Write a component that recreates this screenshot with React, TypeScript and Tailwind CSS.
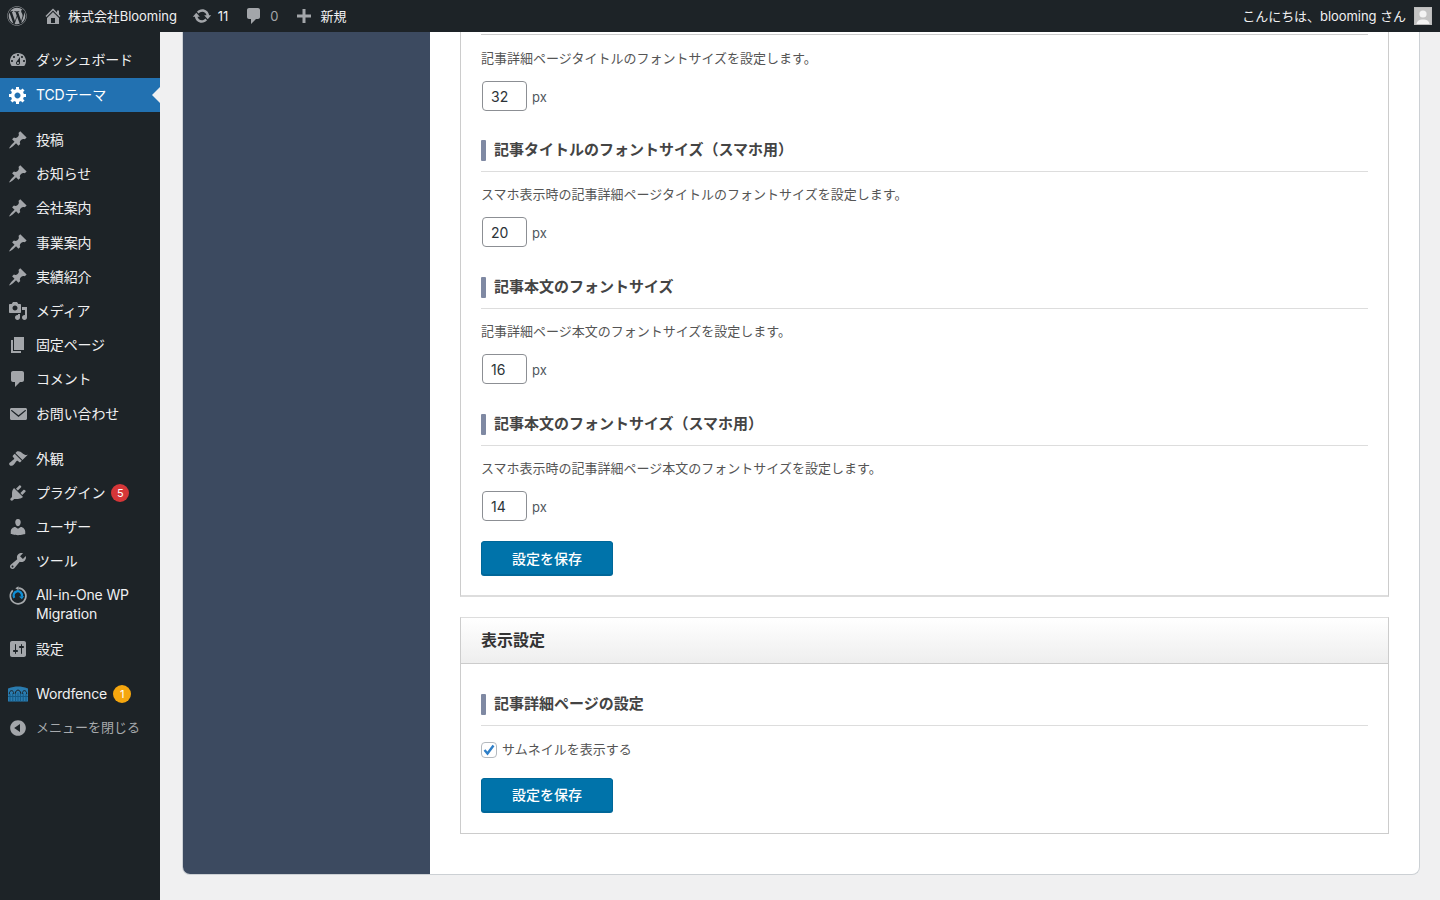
import type { ReactNode } from 'react';
import { FaWordpress } from 'react-icons/fa';

const PIN = 'M10.44 3.02l1.82-1.82 6.36 6.35-1.83 1.82c-1.05-.68-2.48-.57-3.41.36l-.75.75c-.92.93-1.04 2.35-.35 3.41l-1.83 1.82-2.41-2.41-2.8 2.79c-.42.42-3.38 2.71-3.8 2.29s1.86-3.39 2.28-3.81l2.79-2.79L4.1 9.36l1.83-1.82c1.05.69 2.48.57 3.4-.36l.75-.75c.93-.92 1.05-2.35.36-3.41z';
const DASH = 'M3.76 16h12.48c1.1-1.37 1.76-3.11 1.76-5 0-4.42-3.58-8-8-8s-8 3.58-8 8c0 1.89.66 3.63 1.76 5zM10 4c.55 0 1 .45 1 1s-.45 1-1 1-1-.45-1-1 .45-1 1-1zM6 6c.55 0 1 .45 1 1s-.45 1-1 1-1-.45-1-1 .45-1 1-1zm8 0c.55 0 1 .45 1 1s-.45 1-1 1-1-.45-1-1 .45-1 1-1zm-5.37 5.55L12 7v6c0 1.1-.9 2-2 2s-2-.9-2-2c0-.57.24-1.08.63-1.45zM4 10c.55 0 1 .45 1 1s-.45 1-1 1-1-.45-1-1 .45-1 1-1zm12 0c.55 0 1 .45 1 1s-.45 1-1 1-1-.45-1-1 .45-1 1-1zm-5 3c0-.55-.45-1-1-1s-1 .45-1 1 .45 1 1 1 1-.45 1-1z';
const GEAR = 'M18 12h-2.18c-.17.7-.44 1.35-.81 1.93l1.54 1.54-2.1 2.1-1.54-1.54c-.58.36-1.23.63-1.91.79V19H8v-2.18c-.68-.16-1.33-.43-1.91-.79l-1.54 1.54-2.12-2.12 1.54-1.54c-.36-.58-.63-1.23-.79-1.91H1V9.03h2.17c.16-.7.44-1.35.8-1.94L2.43 5.55l2.1-2.1 1.54 1.54c.58-.37 1.24-.64 1.93-.81V2h3v2.18c.68.16 1.33.43 1.91.79l1.54-1.54 2.12 2.12-1.54 1.54c.36.59.64 1.24.8 1.94H18V12zm-8.5 1.5c1.66 0 3-1.34 3-3s-1.34-3-3-3-3 1.34-3 3 1.34 3 3 3z';
const MEDIA = 'M13 11V4c0-.55-.45-1-1-1h-1.67L9 1H5L3.67 3H2c-.55 0-1 .45-1 1v7c0 .55.45 1 1 1h10c.55 0 1-.45 1-1zM7 4.5c1.38 0 2.5 1.12 2.5 2.5S8.38 9.5 7 9.5 4.5 8.38 4.5 7 5.62 4.5 7 4.5zM14 6h5v10.5c0 1.38-1.12 2.5-2.5 2.5S14 17.88 14 16.5s1.12-2.5 2.5-2.5c.17 0 .34.02.5.05V9h-3V6zm-4 8.05V13h2v3.5c0 1.38-1.12 2.5-2.5 2.5S7 17.88 7 16.5 8.12 14 9.5 14c.17 0 .34.02.5.05z';
const PAGE = 'M6 15V2h10v13H6zm-1 1h8v2H3V5h2v11z';
const COMMENT = 'M5 2h9c1.1 0 2 .9 2 2v7c0 1.1-.9 2-2 2h-2l-5 5v-5H5c-1.1 0-2-.9-2-2V4c0-1.1.9-2 2-2z';
const MAIL = 'M19 14.5v-9c0-.83-.67-1.5-1.5-1.5H3.49c-.83 0-1.5.67-1.5 1.5v9c0 .83.67 1.5 1.5 1.5H17.5c.83 0 1.5-.67 1.5-1.5zM3.2 6.2c.3-.4.7-.3 1-.05l6.3 5.05 6.3-5.05c.3-.25.7-.35 1 .05.3.35.1.7-.1.85l-7.2 5.9-7.2-5.9c-.2-.15-.4-.5-.1-.85z';
const BRUSH = 'M14.48 11.06L7.41 3.99l1.5-1.5c.5-.56 2.3-.47 3.51.32 1.21.8 1.43 1.28 2.91 2.1 1.18.64 2.45 1.26 4.45.85zm-.71.71L6.7 4.7 4.93 6.47c-.39.39-.39 1.02 0 1.41l1.06 1.06c.39.39.39 1.03 0 1.42-.6.6-1.43 1.11-2.21 1.69-.35.26-.7.53-1.01.84C1.43 13.23.4 14.85 1.76 16.2c1.36 1.35 2.98.32 4.32-1.01.31-.31.58-.66.84-1.01.58-.78 1.09-1.61 1.69-2.21.39-.39 1.02-.39 1.41 0l1.06 1.06c.39.39 1.02.39 1.41 0z';
const PLUG = 'M13.11 4.36L9.87 7.6 8 5.73l3.24-3.24c.35-.34 1.05-.2 1.56.32.52.51.66 1.21.31 1.55zm-8 1.77l.91-1.12 9.01 9.01-1.19.84c-.71.71-2.63 1.16-3.82 1.16H6.14L4.9 17.26c-.59.59-1.54.59-2.12 0-.59-.58-.59-1.53 0-2.12l1.24-1.24v-3.88c0-1.13.4-3.19 1.09-3.89zm7.26 3.97l3.24-3.24c.34-.35 1.04-.21 1.55.31.52.51.66 1.21.31 1.55l-3.24 3.25z';
const USER = 'M10 9.25c-2.27 0-2.73-3.44-2.73-3.44C7 4.02 7.82 2 9.97 2c2.16 0 2.98 2.02 2.71 3.81 0 0-.41 3.44-2.68 3.44zm0 2.57L12.72 10c2.39 0 4.52 2.33 4.52 4.53v2.49s-3.65 1.13-7.24 1.13c-3.65 0-7.24-1.13-7.24-1.13v-2.49c0-2.25 1.94-4.48 4.47-4.48z';
const WRENCH = 'M16.68 9.77c-1.34 1.34-3.3 1.67-4.95.99l-5.41 6.52c-.99.99-2.59.99-3.58 0s-.99-2.59 0-3.57l6.52-5.42c-.68-1.65-.35-3.61.99-4.95 1.28-1.28 3.12-1.62 4.72-1.06l-2.89 2.89 2.82 2.82 2.86-2.87c.53 1.58.18 3.39-1.08 4.65zM3.81 16.21c.4.39 1.04.39 1.43 0 .4-.4.4-1.04 0-1.43-.39-.4-1.03-.4-1.43 0-.39.39-.39 1.03 0 1.43z';
const SLIDERS = 'M18 16V4c0-1.1-.9-2-2-2H4c-1.1 0-2 .9-2 2v12c0 1.1.9 2 2 2h12c1.1 0 2-.9 2-2zM8 11h1c.55 0 1 .45 1 1s-.45 1-1 1H8v1.5c0 .28-.22.5-.5.5s-.5-.22-.5-.5V13H6c-.55 0-1-.45-1-1s.45-1 1-1h1V5.5c0-.28.22-.5.5-.5s.5.22.5.5V11zm5-2h-1c-.55 0-1-.45-1-1s.45-1 1-1h1V5.5c0-.28.22-.5.5-.5s.5.22.5.5V7h1c.55 0 1 .45 1 1s-.45 1-1 1h-1v5.5c0 .28-.22.5-.5.5s-.5-.22-.5-.5V9z';
const COLLAPSE = 'M10 2.16c4.33 0 7.84 3.51 7.84 7.84s-3.51 7.84-7.84 7.84S2.16 14.33 2.16 10 5.71 2.16 10 2.16zm2 11.72V6.12L6.18 9.97z';
const HOME = 'M16 8.5l1.53 1.53-1.06 1.06L10 4.62l-6.47 6.47-1.06-1.06L10 2.5l4 4v-2h2v4zm-6-2.46l6 5.99V18H4v-5.97zM12 17v-5H8v5h4z';
const UPDATE = 'M10.2 3.28c3.53 0 6.43 2.61 6.92 6h2.08l-3.5 4-3.5-4h2.32c-.45-1.97-2.21-3.45-4.32-3.45-1.45 0-2.73.71-3.54 1.78L4.95 5.66C6.23 4.2 8.11 3.28 10.2 3.28zm-.4 13.44c-3.52 0-6.43-2.61-6.92-6H.8l3.5-4c1.17 1.33 2.33 2.67 3.5 4H5.48c.45 1.97 2.21 3.45 4.32 3.45 1.45 0 2.73-.71 3.54-1.78l1.71 1.95c-1.28 1.46-3.15 2.38-5.25 2.38z';
const PLUS = 'M8.5 3h3v5.5H17v3h-5.5V17h-3v-5.5H3v-3h5.5z';

function Dashicon({ d, className }: { d: string; className: string }) {
  return (
    <svg viewBox="0 0 20 20" fill="currentColor" className={className}>
      <path d={d} fillRule="evenodd" />
    </svg>
  );
}

function MigrationIcon() {
  return (
    <svg viewBox="0 0 20 20" fill="none" className="h-5 w-5">
      <path d="M4.800 4.300A7.800 7.800 0 1 0 10.500 2.200" stroke="#a7aaad" strokeWidth="1.700" />
      <path d="M10.500 0.200v4l-3.200-2z" fill="#a7aaad" />
      <path d="M6.300 11.800A4.200 4.200 0 1 1 13.900 10.200" stroke="#0f8fd6" strokeWidth="2.300" />
      <path d="M11 10.600l2.900 2.700 2.200-3.400z" fill="#0f8fd6" />
    </svg>
  );
}

function WordfenceIcon() {
  return (
    <svg viewBox="0 0 20 16" className="h-4 w-5">
      <path d="M0 2.500C4 .8 7 .4 10 .4s6 .4 10 2.100V15.500H0z" fill="#2a7cb0" />
      <path d="M2 15.500V8M4.800 15.500V7M7.600 15.500V6.500M10 15.500V6.500M12.400 15.500V6.500M15.200 15.500V7M18 15.500V8" stroke="#155a85" strokeWidth="1" />
      <path d="M0 10.500H20" stroke="#155a85" strokeWidth="1" />
      <path d="M1.300 8C1.300 3.500 5.800 3.500 5.800 8M7.400 7.500C7.400 3 12.600 3 12.600 7.500M14.200 8C14.200 3.500 18.700 3.500 18.700 8" stroke="#1d2327" strokeWidth="1" fill="none" />
    </svg>
  );
}

function MenuItem({
  icon,
  label,
  badge,
  badgeClass,
  className = 'h-[34.2px]',
}: {
  icon: ReactNode;
  label: ReactNode;
  badge?: string;
  badgeClass?: string;
  className?: string;
}) {
  return (
    <div className={`flex items-center pl-2 text-[14px] leading-[18px] tracking-[-0.15px] text-[#f0f0f1] ${className}`}>
      <span className="flex w-7 shrink-0 text-[#a3a6aa]">{icon}</span>
      <span>{label}</span>
      {badge && (
        <span className={`ml-[6px] flex h-[18px] w-[18px] items-center justify-center rounded-full text-[11px] text-white ${badgeClass}`}>
          {badge}
        </span>
      )}
    </div>
  );
}

function Sidebar() {
  const ic = 'h-5 w-5';
  return (
    <aside className="flex w-40 shrink-0 flex-col bg-[#1d2327] pt-[11px]">
      <MenuItem className="h-[34px]" icon={<Dashicon d={DASH} className={ic} />} label="ダッシュボード" />
      <div className="relative mb-[11px] mt-px flex h-[34px] items-center bg-[#2271b1] pl-2 text-[14px] tracking-[-0.15px] text-white">
        <span className="flex w-7 shrink-0">
          <Dashicon d={GEAR} className={ic} />
        </span>
        <span className="-mt-[2px]">TCDテーマ</span>
        <span className="absolute right-0 top-[9px] h-0 w-0 border-y-[8px] border-r-[8px] border-y-transparent border-r-[#f0f0f1]" />
      </div>
      {['投稿', 'お知らせ', '会社案内', '事業案内', '実績紹介'].map((t) => (
        <MenuItem key={t} icon={<Dashicon d={PIN} className={ic} />} label={t} />
      ))}
      <MenuItem icon={<Dashicon d={MEDIA} className={ic} />} label="メディア" />
      <MenuItem icon={<Dashicon d={PAGE} className={ic} />} label="固定ページ" />
      <MenuItem icon={<Dashicon d={COMMENT} className={ic} />} label="コメント" />
      <MenuItem icon={<Dashicon d={MAIL} className={ic} />} label="お問い合わせ" />
      <div className="h-[11px]" />
      <MenuItem icon={<Dashicon d={BRUSH} className={ic} />} label="外観" />
      <MenuItem icon={<Dashicon d={PLUG} className={ic} />} label="プラグイン" badge="5" badgeClass="bg-[#d63638]" />
      <MenuItem icon={<Dashicon d={USER} className={ic} />} label="ユーザー" />
      <MenuItem icon={<Dashicon d={WRENCH} className={ic} />} label="ツール" />
      <MenuItem
        className="h-[53px] !items-start pt-2 !leading-[18.5px]"
        icon={<MigrationIcon />}
        label={
          <>
            All-in-One WP
            <br />
            Migration
          </>
        }
      />
      <MenuItem icon={<Dashicon d={SLIDERS} className={ic} />} label="設定" />
      <div className="h-[11px]" />
      <MenuItem icon={<WordfenceIcon />} label="Wordfence" badge="1" badgeClass="bg-[#f5a60e]" />
      <div className="flex h-[34px] items-center pl-2 text-[13px] text-[#a7aaad]">
        <span className="flex w-7 shrink-0 text-[#a3a6aa]">
          <Dashicon d={COLLAPSE} className={ic} />
        </span>
        メニューを閉じる
      </div>
    </aside>
  );
}

function TopBar() {
  return (
    <header className="flex h-8 shrink-0 items-center bg-[#1d2327] pl-[7px] pr-2 text-[13px] tracking-[-0.05px] text-[#f0f0f1]">
      <FaWordpress className="h-5 w-5 text-[#a3a6aa]" />
      <Dashicon d={HOME} className="ml-[16px] h-5 w-5 text-[#a3a6aa]" />
      <span className="ml-[5px] mt-px">株式会社Blooming</span>
      <Dashicon d={UPDATE} className="ml-[15px] h-5 w-5 text-[#a3a6aa]" />
      <span className="ml-[6px] mt-px">11</span>
      <Dashicon d={COMMENT} className="ml-[16px] h-5 w-5 text-[#a3a6aa]" />
      <span className="ml-[6px] mt-px text-[#a3a6aa]">0</span>
      <Dashicon d={PLUS} className="ml-[16px] h-5 w-5 text-[#a3a6aa]" />
      <span className="ml-[6px] mt-px">新規</span>
      <span className="ml-auto mt-px -translate-x-px">こんにちは、blooming さん</span>
      <span className="ml-[7px] flex h-[18px] w-[18px] items-end justify-center overflow-hidden border border-[#bdbdbd] bg-[#c4c4c4]">
        <svg viewBox="0 0 16 16" className="h-4 w-4" fill="#f4f4f4">
          <circle cx="8" cy="6" r="3.600" />
          <path d="M1.500 16c.4-3.400 3-4.600 6.500-4.600s6.100 1.200 6.500 4.600z" />
        </svg>
      </span>
    </header>
  );
}

function Heading({ children }: { children: ReactNode }) {
  return (
    <div className="flex h-[32px] items-start border-b border-[#ddd] pb-[10px]">
      <span className="h-[21px] w-[5px] rounded-[1px] bg-[#7f89a3]" />
      <h3 className="ml-2 text-[15px] font-bold leading-[20px] text-[#444]">{children}</h3>
    </div>
  );
}

function SizeField({ value }: { value: string }) {
  return (
    <div className="mt-3 flex items-center">
      <div className="ml-px flex h-[30px] w-[45px] items-center rounded-[4px] border border-[#8c8f94] bg-white pl-2 text-[14px] text-[#2c3338]">
        {value}
      </div>
      <span className="ml-[5px] mt-[3px] text-[13px] text-[#50575e]">px</span>
    </div>
  );
}

function Desc({ children }: { children: ReactNode }) {
  return <p className="mt-[11px] h-[22px] text-[13px] leading-[22px] text-[#555]">{children}</p>;
}

function SaveButton() {
  return (
    <button className="flex h-[34px] w-[132px] items-center justify-center rounded-[3px] border border-[#006799] bg-[#0073aa] text-[14px] font-medium text-white shadow-[0_1px_0_#006799]">
      設定を保存
    </button>
  );
}

function FontBlock({ title, desc, value }: { title: string; desc: string; value: string }) {
  return (
    <section className="mb-[30px]">
      <Heading>{title}</Heading>
      <Desc>{desc}</Desc>
      <SizeField value={value} />
    </section>
  );
}

export default function App() {
  return (
    <div
      className="flex h-screen flex-col overflow-hidden bg-[#f0f0f1]"
      style={{ fontFamily: 'Inter, "Noto Sans CJK JP", sans-serif' }}
    >
      <TopBar />
      <div className="flex min-h-0 flex-1">
        <Sidebar />
        <main className="min-w-0 flex-1 pl-[22px] pr-5">
          <div className="flex h-[843px] overflow-hidden rounded-b-[8px] border-x border-b border-[#ccd0d4] bg-white">
            <div className="w-[247px] shrink-0 bg-[#3c4a60]" />
            <div className="min-w-0 flex-1 px-[30px]">
              <div className="h-[565px] border-x border-b-2 border-[#ccc] border-b-[#ddd] px-5 pt-[2px]">
                <div className="border-b border-[#ccc]" />
                <div className="pt-px">
                  <Desc>記事詳細ページタイトルのフォントサイズを設定します。</Desc>
                </div>
                <div className="mb-[29px]">
                  <SizeField value="32" />
                </div>
                <FontBlock
                  title="記事タイトルのフォントサイズ（スマホ用）"
                  desc="スマホ表示時の記事詳細ページタイトルのフォントサイズを設定します。"
                  value="20"
                />
                <FontBlock
                  title="記事本文のフォントサイズ"
                  desc="記事詳細ページ本文のフォントサイズを設定します。"
                  value="16"
                />
                <section>
                  <Heading>記事本文のフォントサイズ（スマホ用）</Heading>
                  <Desc>スマホ表示時の記事詳細ページ本文のフォントサイズを設定します。</Desc>
                  <SizeField value="14" />
                </section>
                <div className="mt-5">
                  <SaveButton />
                </div>
              </div>

              <div className="mt-5 border border-[#ccc] border-t-[#ddd]">
                <div className="flex h-[46px] items-center border-b border-[#ccc] bg-gradient-to-b from-white to-[#eeeeee] pb-[2px] pl-5 text-[16px] font-bold text-[#333]">
                  表示設定
                </div>
                <div className="px-5 pb-[21px] pt-[30px]">
                  <Heading>記事詳細ページの設定</Heading>
                  <label className="mt-[14px] flex items-center text-[13px] text-[#555]">
                    <span className="flex h-4 w-4 items-center justify-center rounded-[4px] border-[1.5px] border-[#b4b9be] bg-white">
                      <svg viewBox="0 0 14 14" className="h-[14px] w-[14px]" fill="none">
                        <path d="M2.500 7 5.500 10.500 11.500 2.500" stroke="#2e7fc8" strokeWidth="2.400" />
                      </svg>
                    </span>
                    <span className="ml-[5px]">サムネイルを表示する</span>
                  </label>
                  <div className="mt-[18px]">
                    <SaveButton />
                  </div>
                </div>
              </div>
            </div>
          </div>
        </main>
      </div>
    </div>
  );
}
